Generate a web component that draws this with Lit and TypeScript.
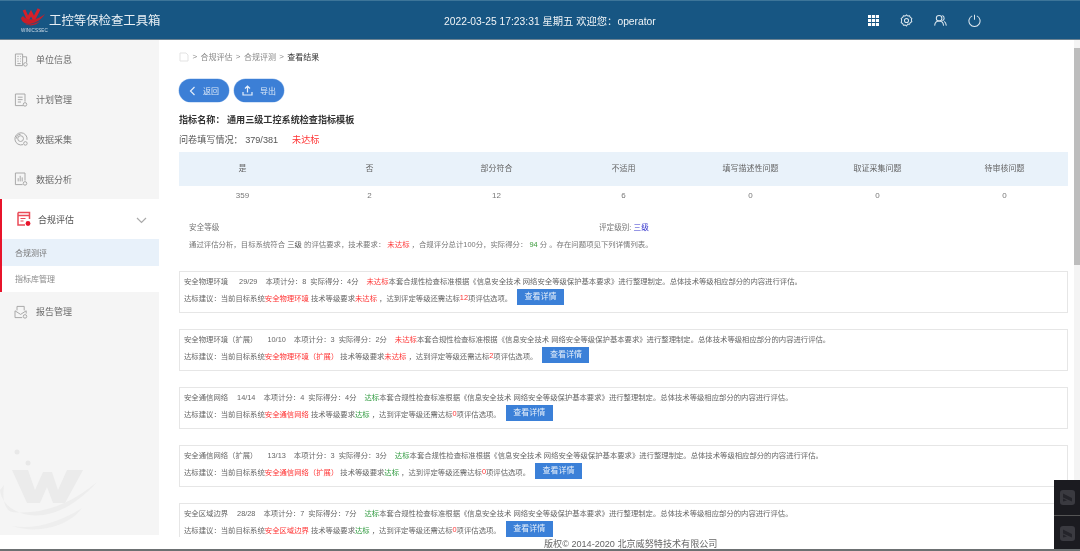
import { LitElement, html, css, svg } from "lit";
import { customElement } from "lit/decorators.js";

const icons: Record<string, any> = {
  unit: svg`<path d="M3 17V2.500h9V17zM12 6h5v7M5.500 5.500h1.500M9 5.500h1M5.500 8.500h1.500M9 8.500h1M5.500 11.500h1.500M9 11.500h1M5.500 14.500h4"/><circle cx="15.500" cy="15.500" r="2.200"/>`,
  plan: svg`<path d="M13 17H3V2.500h12V12M6 6.500h6M6 9.500h6M6 12.500h4"/><circle cx="15" cy="15.500" r="2.200"/>`,
  data: svg`<path d="M12.500 17a7.600 7.600 0 1 1 5-6"/><circle cx="9.500" cy="9.500" r="3.600"/><path d="M9.500 4.200a5.300 5.300 0 0 0-5.200 5.200"/><circle cx="15.500" cy="15.500" r="2.200"/>`,
  chart: svg`<path d="M12 17H3V2.500h12V12M6.500 13V9M9 13V6M11.500 13V8"/><circle cx="15" cy="15.500" r="2.200"/>`,
  report: svg`<path d="M5 8V3h9v5M2.500 8.500 9.500 13l7-4.500M2.500 8.500V17h9M16.500 8.500V12"/><circle cx="15" cy="15.500" r="2.200"/>`,
};

const blocks = [
  { name: "安全物理环境", count: "29/29", total: 8, got: 4, pass: false, miss: 12, gap: 11 },
  { name: "安全物理环境（扩展）", count: "10/10", total: 3, got: 2, pass: false, miss: 2, gap: 10 },
  { name: "安全通信网络", count: "14/14", total: 4, got: 4, pass: true, miss: 0, gap: 9 },
  { name: "安全通信网络（扩展）", count: "13/13", total: 3, got: 3, pass: true, miss: 0, gap: 10 },
  { name: "安全区域边界", count: "28/28", total: 7, got: 7, pass: true, miss: 0, gap: 9 },
];

const cols = [
  ["是", "359"], ["否", "2"], ["部分符合", "12"], ["不适用", "6"],
  ["填写描述性问题", "0"], ["取证采集问题", "0"], ["待审核问题", "0"],
];

@customElement("app-root")
export class AppRoot extends LitElement {
  static styles = css`
    :host { display: block; width: 1080px; height: 551px; overflow: hidden; position: relative; background: #fff;
      font-family: "Liberation Sans", "Noto Sans CJK SC", sans-serif; color: #666; filter: blur(0.4px); }
    .page { display: flex; flex-direction: column; height: 551px; }
    header { flex: none; height: 40px; background: #175683; border-top: 1px solid #3d7599; box-sizing: border-box; display: flex; align-items: center; color: #e8eff4; border-bottom: 1px solid #6d8392; }
    .logo { width: 49px; flex: none; position: relative; height: 38px; }
    .logo svg { position: absolute; left: 20px; top: 6px; }
    .logo small { position: absolute; left: 21px; top: 27px; font-size: 4.6px; color: #cfdde8; letter-spacing: .1px; }
    .brand { font-size: 12.400px; width: 395px; flex: none; white-space: nowrap; }
    .now { font-size: 10.300px; width: 217px; flex: none; white-space: nowrap; color: #f0f4f7; }
    .tools { display: flex; gap: 21px; margin-left: 207px; align-items: center; }
    .tools svg { display: block; fill: none; stroke: #dce7ef; stroke-width: 1.100; }
    .body { flex: 1; display: flex; min-height: 0; }
    aside { width: 159px; flex: none; height: 495px; background: #f5f5f5; position: relative; overflow: hidden; }
    .item { height: 39.750px; display: flex; align-items: center; font-size: 9px; color: #6b6b6b; padding-left: 13px; gap: 7px; position: relative; }
    .item svg { fill: none; stroke: #a5a5a5; stroke-width: 1.200; flex: none; }
    .group { background: #fff; border-left: 2px solid #e8142b; }
    .group .item { height: 40px; padding-left: 15px; gap: 7px; color: #555; }
    .group .item svg.red { stroke: #ea4b58; }
    .chev { position: absolute; left: 134px; top: 18px; }
    .sub { height: 26.500px; display: flex; align-items: center; padding-left: 13px; font-size: 8px; color: #8a8a8a; }
    .sub.on { background: #e8f1fa; color: #777; }
    .mark { position: absolute; left: 0; top: 400px; }
    main { flex: 1; min-width: 0; padding: 10px 12px 0 20px; overflow: hidden; position: relative; }
    .crumb { display: flex; align-items: center; font-size: 8px; color: #888; gap: 3.400px; height: 13px; }
    .crumb b { font-weight: 400; color: #333; }
    .crumb svg { fill: none; stroke: #e3e3e3; }
    .btns { display: flex; gap: 5px; margin-top: 16px; }
    .pill { width: 50px; height: 23px; border-radius: 12px; background: #3c7fd6; color: #dce8f7; font-size: 8px; display: flex; align-items: center; justify-content: center; gap: 7px; box-shadow: 0 0 0 .5px #a9c8ef; }
    .pill svg { fill: none; stroke: #e4eefa; stroke-width: 1.200; }
    h1 { margin: 12px 0 0; font-size: 9.100px; line-height: 13px; color: #333; font-weight: 700; white-space: nowrap; }
    .fill { margin-top: 7px; font-size: 9.100px; line-height: 13px; color: #555; display: flex; white-space: nowrap; }
    .fill .no { margin-left: 14px; color: #f33; }
    .grid { display: grid; grid-template-columns: repeat(7, 1fr); margin-top: 5px; font-size: 8px; text-align: center; }
    .grid .h { height: 34px; line-height: 34px; background: #e9f2fa; color: #666; }
    .grid .v { height: 24px; line-height: 20px; color: #777; }
    .level { display: flex; margin: 13px 0 0 10px; font-size: 7.600px; line-height: 10px; color: #777; }
    .level span { width: 410px; }
    .level i { font-style: normal; color: #33c; }
    .sum { margin: 7px 0 0 10px; font-size: 7.400px; line-height: 10px; color: #777; white-space: nowrap; }
    .sum .no { color: #f33; } .sum .ok { color: #3a9a3a; } .sum em { font-style: normal; color: #555; }
    .blocks { margin-top: 21px; display: flex; flex-direction: column; gap: 16px; }
    .block { height: 42px; box-sizing: border-box; border: 1px solid #e6e6e6; padding: 4px 4px 0; font-size: 7.350px; color: #666; white-space: nowrap; flex: none; }
    .r1 { height: 10px; line-height: 10px; display: flex; margin-top: 1px; }
    .r2 { height: 16px; margin-top: 2px; display: flex; align-items: center; }
    .no { color: #f33; } .ok { color: #2e9a3e; }
    .go { background: #3b80d8; color: #e6effa; width: 47px; height: 16px; line-height: 16px; text-align: center; font-size: 8px; margin-left: 5px; flex: none; }
    footer { position: absolute; left: 0; right: 0; bottom: 0; height: 14px; padding-top: 1px; box-sizing: border-box; background: #fff; font-size: 9.100px; line-height: 13px; padding-left: 385px; color: #666; white-space: nowrap; }
    .bottom { position: absolute; left: 0; right: 0; bottom: 0; height: 2px; background: #6c7072; }
    .track { position: absolute; right: 0; top: 40px; width: 6px; bottom: 0; background: #f4f4f4; }
    .thumb { position: absolute; top: 8px; left: 0; right: 0; height: 217px; background: #bdbdbd; }
    .widgets { position: absolute; right: 0; bottom: 0; width: 26px; display: flex; flex-direction: column; gap: 1px; background: #555; }
    .w { height: 35px; background: #1b1b20; display: flex; align-items: center; justify-content: center; }
  `;

  private side(label: string, icon: string) {
    return html`<div class="item"><svg width="16" height="16" viewBox="0 0 20 20">${icons[icon]}</svg>${label}</div>`;
  }

  private block(b: (typeof blocks)[number]) {
    const state = b.pass ? "达标" : "未达标";
    const cls = b.pass ? "ok" : "no";
    return html`<div class="block">
      <div class="r1">
        <span>${b.name}</span><span style="margin-left:${b.gap}px">${b.count}</span>
        <span style="margin-left:8px">本项计分：${b.total}</span>
        <span style="margin-left:4px">实际得分：${b.got}分</span>
        <span class=${cls} style="margin-left:8px">${state}</span>
        <span>本套合规性检查标准根据《信息安全技术 网络安全等级保护基本要求》进行整理制定。总体技术等级相应部分的内容进行评估。</span>
      </div>
      <div class="r2">
        <span>达标建议：当前目标系统</span><span class="no">${b.name}</span>
        <span>&nbsp;技术等级要求</span><span class=${cls}>${state}</span>
        <span>&nbsp;，达到评定等级还需达标</span><span class="no">${b.miss}</span><span>项评估选项。</span>
        <span class="go">查看详情</span>
      </div>
    </div>`;
  }

  render() {
    return html`<div class="page">
      <header>
        <div class="logo">
          <svg width="26" height="22" viewBox="0 0 26 22"><path d="M4 3l4 9 3-6 3 6 5-10" fill="none" stroke="#d5202a" stroke-width="3"/><path d="M1 11c1 8 15 9 24-4-7 6-17 8-22 2z" fill="#c81e28"/><path d="M5 17c6 3 12 1 15-3-5 3-10 4-15 3z" fill="#c81e28"/></svg>
          <small>WINICSSEC</small>
        </div>
        <div class="brand">工控等保检查工具箱</div>
        <div class="now">2022-03-25 17:23:31 星期五 欢迎您：operator</div>
        <div class="tools">
          <svg width="11" height="11" viewBox="0 0 12 12"><path stroke="none" fill="#fff" d="M0 0h3.400v3.400H0zM4.300 0h3.400v3.400H4.300zM8.600 0H12v3.400H8.600zM0 4.300h3.400v3.400H0zM4.300 4.300h3.400v3.400H4.300zM8.600 4.300H12v3.400H8.600zM0 8.600h3.400V12H0zM4.300 8.600h3.400V12H4.300zM8.600 8.600H12V12H8.600z"/></svg>
          <svg width="13" height="13" viewBox="0 0 14 14"><path d="M7 1l1.400 1.200 1.900-.2.800 1.700 1.600 1-.5 1.800.5 1.800-1.600 1-.8 1.700-1.900-.2L7 13l-1.400-1.200-1.900.2-.8-1.700-1.600-1L1.800 6.500 1.300 4.700l1.600-1 .8-1.700 1.900.2z"/><circle cx="7" cy="7" r="2.200"/></svg>
          <svg width="13" height="13" viewBox="0 0 14 14"><circle cx="5.500" cy="4.500" r="3"/><path d="M.7 12.500c.3-3.300 2.300-5 4.800-5s4.500 1.700 4.800 5M9 1.700a3 3 0 0 1 0 5.600M11 8c1.300.8 2 2.300 2.300 4.500"/></svg>
          <svg width="13" height="13" viewBox="0 0 14 14"><path d="M4.500 2a6 6 0 1 0 5 0M7 .8v5.400"/></svg>
        </div>
      </header>
      <div class="body">
        <aside>
          ${this.side("单位信息", "unit")}
          ${this.side("计划管理", "plan")}
          ${this.side("数据采集", "data")}
          ${this.side("数据分析", "chart")}
          <div class="group">
            <div class="item">
              <svg class="red" width="14" height="16" viewBox="0 0 14 16"><path d="M1 1.500h11.500V8M1 1.500V14h7M1 4.500h11.500" stroke-width="1.500"/><path d="M3.500 7.500h5M3.500 10h3"/><circle cx="11" cy="12.500" r="2.400" fill="#e8142b" stroke="none"/></svg>
              合规评估
              <svg class="chev" width="11" height="7" viewBox="0 0 11 7"><path d="M1 1l4.500 4.500L10 1" stroke="#aaa"/></svg>
            </div>
            <div class="sub on">合规测评</div>
            <div class="sub">指标库管理</div>
          </div>
          ${this.side("报告管理", "report")}
          <svg class="mark" width="110" height="95" viewBox="0 0 110 95">
            <path d="M12 30H28L35 50L43 32H52L58 50L67 30H83L65 63H53L47 47L40 63H27Z" fill="#ebebeb"/>
            <path d="M0 50C2 75 50 95 97 42C70 65 40 75 12 72C5 70 2 60 4 45Z" fill="#ededed"/>
            <path d="M12 86C40 95 70 85 82 68C60 82 35 90 12 86Z" fill="#eeeeee"/>
            <circle cx="17" cy="12" r="2.500" fill="#e8e8e8"/><circle cx="28" cy="23" r="2.500" fill="#e8e8e8"/>
          </svg>
        </aside>
        <main>
          <div class="crumb">
            <svg width="10" height="10" viewBox="0 0 10 10"><path d="M1 1h6l2 2v6H1z"/></svg>
            <span>&gt;</span><span>合规评估</span><span>&gt;</span><span>合规评测</span><span>&gt;</span><b>查看结果</b>
          </div>
          <div class="btns">
            <div class="pill"><svg width="7" height="10" viewBox="0 0 7 10"><path d="M5.500 1L1.500 5l4 4"/></svg>返回</div>
            <div class="pill"><svg width="11" height="11" viewBox="0 0 11 11"><path d="M1 7v3h9V7M5.500 7.500V1.500M3 3.500l2.500-2.500L8 3.500"/></svg>导出</div>
          </div>
          <h1>指标名称： 通用三级工控系统检查指标模板</h1>
          <div class="fill"><span>问卷填写情况： 379/381</span><span class="no">未达标</span></div>
          <div class="grid">
            ${cols.map((c) => html`<div class="h">${c[0]}</div>`)}
            ${cols.map((c) => html`<div class="v">${c[1]}</div>`)}
          </div>
          <div class="level"><span>安全等级</span><div>评定级别: <i>三级</i></div></div>
          <div class="sum">通过评估分析，目标系统符合 <em>三级</em> 的评估要求，技术要求： <span class="no">未达标</span> ，合规评分总计100分，实际得分： <span class="ok">94</span> 分 。存在问题项见下列详情列表。</div>
          <div class="blocks">${blocks.map((b) => this.block(b))}</div>
          <footer>版权© 2014-2020 北京威努特技术有限公司</footer>
        </main>
      </div>
      <div class="track"><div class="thumb"></div></div>
      <div class="widgets">
        ${[0, 1].map(() => html`<div class="w"><svg width="15" height="15" viewBox="0 0 15 15"><rect width="15" height="15" rx="3" fill="#3a3a40"/><path d="M3 3.500l9 4.500v3.500L3 7.500zM3 8.500l4 2-4 1z" fill="#24242a"/></svg></div>`)}
      </div>
      <div class="bottom"></div>
    </div>`;
  }
}
